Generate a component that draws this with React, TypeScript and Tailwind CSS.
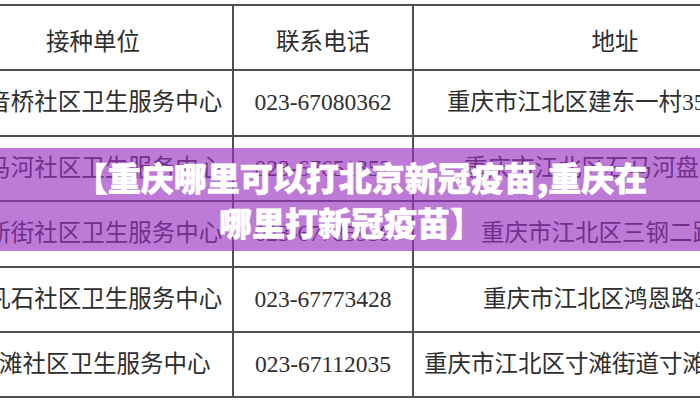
import React from 'react';

const ROWS = [
  { unit: '观音桥社区卫生服务中心', phone: '023-67080362', addr: '重庆市江北区建东一村35号', pad: 'pl-[33px]' },
  { unit: '石马河社区卫生服务中心', phone: '023-67651352', addr: '重庆市江北区石马河盘溪路', pad: 'pl-[50px]' },
  { unit: '华新街社区卫生服务中心', phone: '023-67785939', addr: '重庆市江北区三钢二路', pad: 'pl-[67px]' },
  { unit: '大凡石社区卫生服务中心', phone: '023-67773428', addr: '重庆市江北区鸿恩路3号', pad: 'pl-[69px]' },
  { unit: '寸滩社区卫生服务中心', phone: '023-67112035', addr: '重庆市江北区寸滩街道寸滩路', pad: 'pl-[10px]' },
];

export default function App() {
  return (
    <div className="relative w-[700px] h-[400px] overflow-hidden bg-white text-[#2e2e2e] font-['Liberation_Serif','Noto_Sans_CJK_SC',serif]">
      {/* table, cropped on both sides like the original screenshot */}
      <table className="ml-[-48px] mt-[4px] border-collapse table-fixed w-[864px] text-[23.5px]">
        <colgroup>
          <col className="w-[280px]" />
          <col className="w-[180px]" />
          <col className="w-[404px]" />
        </colgroup>
        <thead>
          <tr className="h-[65.4px]">
            <th className="border-2 border-[#505050] font-normal font-['Noto_Sans_CJK_SC',sans-serif] pt-[6px]">接种单位</th>
            <th className="border-2 border-[#505050] font-normal font-['Noto_Sans_CJK_SC',sans-serif] pt-[6px]">联系电话</th>
            <th className="border-2 border-[#505050] font-normal font-['Noto_Sans_CJK_SC',sans-serif] pt-[6px]">地址</th>
          </tr>
        </thead>
        <tbody>
          {ROWS.map((r) => (
            <tr key={r.phone} className="h-[65.4px]">
              <td className="border-2 border-[#505050] text-center whitespace-nowrap overflow-hidden">{r.unit}</td>
              <td className="border-2 border-[#505050] text-center whitespace-nowrap">{r.phone}</td>
              <td className={`border-2 border-[#505050] text-left whitespace-nowrap overflow-hidden ${r.pad}`}>{r.addr}</td>
            </tr>
          ))}
        </tbody>
      </table>

      {/* title banner over the table */}
      <div className="absolute left-0 right-0 top-[148px] h-[103px] bg-[rgba(152,48,192,0.64)] flex flex-col items-center justify-center text-white font-black text-[33px] leading-[45px] [-webkit-text-stroke:0.6px_white] font-['Noto_Sans_CJK_SC',sans-serif]">
        <span className="pl-[22px]">【重庆哪里可以打北京新冠疫苗,重庆在</span>
        <span className="pl-[2px]">哪里打新冠疫苗】</span>
      </div>
    </div>
  );
}
